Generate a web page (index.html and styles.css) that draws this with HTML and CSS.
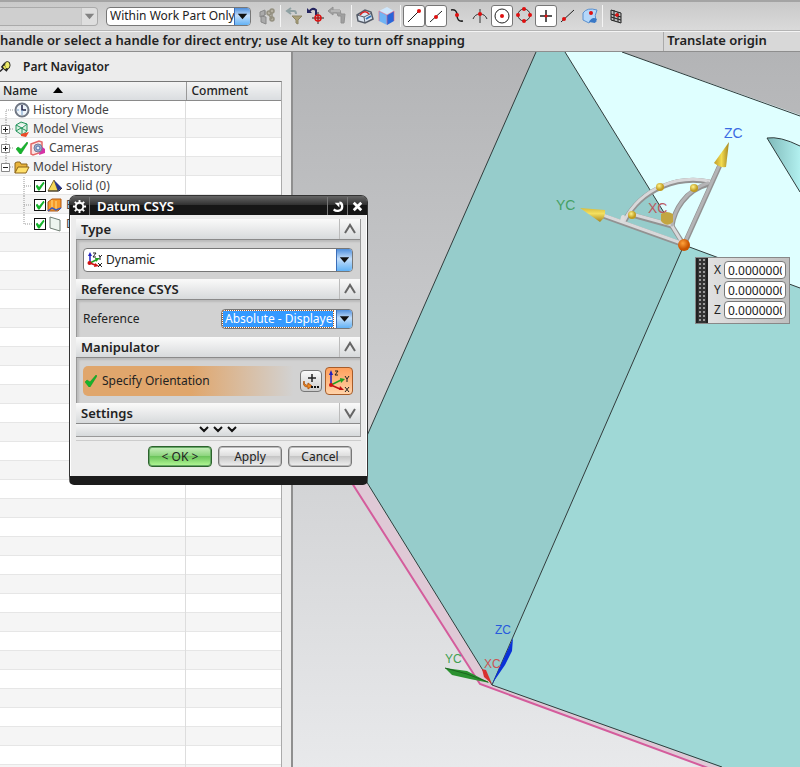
FILE: index.html
```html
<!DOCTYPE html>
<html lang="en">

<head>
  <meta charset="utf-8">
  <title>Datum CSYS</title>
  <link rel="stylesheet" href="styles.css">
</head>

<body>
  <!-- shared icon parts -->
  <svg class="defs" width="0" height="0" aria-hidden="true">
    <defs>
      <symbol id="csys" viewBox="0 0 16 16">
        <path d="M3 11V3" stroke="#2020c0" stroke-width="1.5" fill="none" />
        <path d="M3 0L5 4H1z" fill="#2020c0" />
        <path d="M3 11L9 8" stroke="#20a020" stroke-width="1.5" fill="none" />
        <path d="M8 6L13 6L9 10z" fill="#20a020" />
        <path d="M3 11L8 13" stroke="#d01010" stroke-width="1.5" fill="none" />
        <path d="M8 11L12 14L7 15z" fill="#d01010" />
        <circle cx="2.500" cy="11" r="2" fill="#d01010" />
        <path d="M6 1H9L6 5H9M12 3L13 5L15 3M13 5V8M11 11L15 15M15 11L11 15" stroke="#222" fill="none" />
      </symbol>
      <symbol id="tick" viewBox="0 0 12 12">
        <path d="M0 7L2 5L5 7L11 0L12 1L5 12H4z" fill="#16b42c" stroke="#0c9420" stroke-width=".5" />
      </symbol>
      <symbol id="arrow" viewBox="0 0 16 18">
        <path d="M3 6H13L8 12z" fill="#111" />
      </symbol>
      <linearGradient id="bg" x2="0" y2="1">
        <stop stop-color="#b3b4b6" />
        <stop offset="1" stop-color="#e8e9eb" />
      </linearGradient>
      <linearGradient id="hole">
        <stop stop-color="#7fb9b9" />
        <stop offset="1" stop-color="#b2f0ef" />
      </linearGradient>
      <linearGradient id="gold">
        <stop stop-color="#c09a28" />
        <stop offset=".5" stop-color="#f2dc50" />
        <stop offset="1" stop-color="#a48420" />
      </linearGradient>
      <linearGradient id="gold-flat" x2="0" y2="1">
        <stop stop-color="#d8bc3c" />
        <stop offset=".4" stop-color="#f4e060" />
        <stop offset="1" stop-color="#a48420" />
      </linearGradient>
      <radialGradient id="ball" cx=".4" cy=".35">
        <stop stop-color="#fff48c" />
        <stop offset="1" stop-color="#c09c20" />
      </radialGradient>
      <radialGradient id="origin" cx=".4" cy=".35">
        <stop stop-color="#ffa23c" />
        <stop offset="1" stop-color="#c85400" />
      </radialGradient>
    </defs>
  </svg>

  <header class="toolbar">
    <div class="combo disabled">
      <select class="combo-field" aria-label="Selection filter" disabled><option></option></select>
      <svg class="combo-arrow"><use href="#arrow" /></svg>
    </div>
    <div class="combo scope">
      <select class="combo-field" aria-label="Selection scope"><option>Within Work Part Only</option></select>
      <svg class="combo-arrow"><use href="#arrow" /></svg>
    </div>
    <div class="tools">
      <button class="tool" aria-label="Interpart link"><svg viewBox="0 0 20 20"><path d="M3 6L8 4V9L3 11zM4 11V16L9 18V11L4 10zM8 5V9" fill="#aaa" stroke="#888" /><g fill="#b5b0a2" stroke="#949080" stroke-width="1.500"><circle cx="12" cy="7" r="2" /><circle cx="15" cy="5" r="2" /><circle cx="15" cy="13" r="2" /><path d="M12 9L15 13M15 7V11" /></g></svg></button>
    </div>
    <div class="tools">
      <button class="tool" aria-label="Reset filters"><svg viewBox="0 0 20 20"><path d="M7 2L3 5L7 8M3 5H10Q12 5 12 8" fill="none" stroke="#8fa1a3" stroke-width="2" /><path d="M8 10H18L14 14V18L12 17V14z" fill="#aaa078" stroke="#8c8567" /></svg></button>
      <button class="tool" aria-label="Move to point"><svg viewBox="0 0 20 20"><path d="M3 6Q6 1 10 4V9" fill="none" stroke="#252560" stroke-width="2" /><path d="M1 2V7H6z" fill="#252560" /><path d="M12 6V18M6 12H18" stroke="#222" /><circle cx="12" cy="12" r="3" fill="none" stroke="#d11" stroke-width="1.500" /><path d="M10 12H14M12 10V14" stroke="#d11" /></svg></button>
      <button class="tool" aria-label="Back"><svg viewBox="0 0 20 20"><path d="M0 5L5 1V4H12L13 8H17L16 17H13V10H10L9 7H5V9z" fill="#a0a0a0" stroke="#929292" /><path d="M3 5H12" stroke="#b5b5b5" stroke-width="2" /></svg></button>
    </div>
    <div class="tools">
      <button class="tool" aria-label="Wireframe"><svg viewBox="0 0 20 20"><path d="M2 9L10 4L16 6L18 13L10 17L3 15z" fill="#dce6f2" stroke="#555c68" stroke-width="1.500" /><path d="M2 9L9 11L10 17M9 11L17 7" fill="none" stroke="#555c68" /><path d="M5 9Q10 3 14 8" fill="none" stroke="#d22" stroke-width="1.500" /><path d="M11 13L16 10" stroke="#3374bb" stroke-width="2" /></svg></button>
      <button class="tool" aria-label="Shaded"><svg viewBox="0 0 20 20"><path d="M2 5L10 9V19L2 15z" fill="#6fb4f5" /><path d="M10 9L17 5V15L10 19z" fill="#2966d9" /><path d="M2 5L10 1L17 5L10 9z" fill="#cfe7fc" /><path d="M2 5L10 9L17 5M10 9V18M2 5V15M17 5V15" fill="none" stroke="#df5f85" stroke-width=".6" /></svg></button>
    </div>
    <div class="tools snaps">
      <button class="tool on" aria-label="End point"><svg viewBox="0 0 20 20"><path d="M4 16L15 5" stroke="#222" /><circle cx="15" cy="5" r="2" fill="#e01010" /></svg></button>
      <button class="tool on" aria-label="Mid point"><svg viewBox="0 0 20 20"><path d="M4 16L16 5" stroke="#222" /><circle cx="10" cy="11" r="2" fill="#e01010" /></svg></button>
      <button class="tool" aria-label="Control point"><svg viewBox="0 0 20 20"><path d="M3 4Q9 3 9 9Q9 16 15 15" fill="none" stroke="#222" stroke-width="1.500" /><circle cx="9" cy="9" r="2" fill="#e01010" /></svg></button>
      <button class="tool" aria-label="Intersection point"><svg viewBox="0 0 20 20"><path d="M10 3V17M3 13Q5 8 10 8T17 13" fill="none" stroke="#333" /><circle cx="10" cy="8" r="2" fill="#e01010" /></svg></button>
      <button class="tool on" aria-label="Arc center"><svg viewBox="0 0 20 20"><circle cx="10" cy="10" r="7" fill="none" stroke="#222" /><circle cx="10" cy="10" r="2" fill="#e01010" /></svg></button>
      <button class="tool" aria-label="Quadrant point"><svg viewBox="0 0 20 20"><circle cx="10" cy="9" r="6" fill="none" stroke="#333" /><g fill="#e01010"><circle cx="10" cy="3" r="2" /><circle cx="4" cy="9" r="2" /><circle cx="16" cy="9" r="2" /><circle cx="10" cy="15" r="2" /></g></svg></button>
      <button class="tool on" aria-label="Existing point"><svg viewBox="0 0 20 20"><path d="M10 4V16M4 10H16" stroke="#222" stroke-width="1.500" /><circle cx="10" cy="10" r="1.500" fill="#e01010" /></svg></button>
      <button class="tool" aria-label="Point on curve"><svg viewBox="0 0 20 20"><path d="M3 16L16 4" stroke="#222" /><circle cx="6" cy="13" r="2" fill="#e01010" /></svg></button>
      <button class="tool" aria-label="Point on face"><svg viewBox="0 0 20 20"><path d="M3 7Q7 1 17 4Q14 9 16 16Q12 12 9 17L3 14z" fill="#b4d7fa" stroke="#5990cf" /><path d="M9 16Q12 10 17 13L15 17z" fill="#3978c6" /><circle cx="11" cy="7" r="2" fill="#e01010" /></svg></button>
    </div>
    <div class="tools">
      <button class="tool" aria-label="Bounded grid"><svg viewBox="0 0 20 20"><path d="M5 4L15 7V17L5 14zM8 4V15M12 6V16M5 8L15 11M5 11L15 14" fill="#bbb" stroke="#222" /><path d="M9 9H13M11 7V11" stroke="#e01010" stroke-width="1.500" /></svg></button>
    </div>
  </header>

  <div class="cue">
    <p class="cue-text">handle or select a handle for direct entry; use Alt key to turn off snapping</p>
    <p class="status-text">Translate origin</p>
  </div>

  <main class="work">
    <aside class="navigator">
      <h2 class="nav-title">
        <svg class="pin" viewBox="0 0 12 12"><path d="M0 11L3 8M2 6L7 10L9 7L10 2L5 2z" stroke="#222" stroke-width="1.500" fill="#6b6828" /><ellipse cx="8" cy="4" rx="3" ry="4" fill="#eeed6a" stroke="#222" /><path d="M4 5L6 8" stroke="#e8e55b" stroke-width="2" /></svg>
        Part Navigator
      </h2>
      <div class="tree">
        <table class="tree-table">
          <thead>
            <tr>
              <th class="col-name">Name <svg class="sort" viewBox="0 0 10 6"><path d="M0 6L5 0L10 6z" /></svg></th>
              <th>Comment</th>
            </tr>
          </thead>
          <tbody>
            <tr>
              <td><div class="node"><svg class="guide" viewBox="0 0 14 19"><path class="dots" d="M6 19V9H14" /></svg><svg class="icon" viewBox="0 0 16 16"><circle cx="8" cy="8" r="6.500" fill="#eef4fa" stroke="#707784" stroke-width="2" /><path d="M8 3V8H12" fill="none" stroke="#224" stroke-width="1.500" /><path d="M8 8V13M3 8H5" stroke="#77a0cc" /></svg>History Mode</div></td>
              <td></td>
            </tr>
            <tr>
              <td><div class="node"><svg class="guide" viewBox="0 0 14 19"><path class="dots" d="M6 0V19M6 9H14" /><path class="box" d="M1.500 5.500H9.500V13.500H1.500z" /><path class="sign" d="M3 9.500H8M5.500 7V12" /></svg><svg class="icon" viewBox="0 0 16 16"><path d="M2 4L7 1L13 3V10L8 14L2 10zM2 4L8 7L13 3M8 7V13M2 10L7 7L13 10" fill="#d8f0df" stroke="#22935c" /><path d="M7 13L15 11L12 16L7 15z" fill="#ec4b28" /></svg>Model Views</div></td>
              <td></td>
            </tr>
            <tr>
              <td><div class="node"><svg class="guide" viewBox="0 0 14 19"><path class="dots" d="M6 0V19M6 9H14" /><path class="box" d="M1.500 5.500H9.500V13.500H1.500z" /><path class="sign" d="M3 9.500H8M5.500 7V12" /></svg><svg class="mark"><use href="#tick" /></svg><svg class="icon" viewBox="0 0 16 16"><path d="M1 4L9 1L12 2V12L3 15L1 14z" fill="#fbe4e4" stroke="#e46767" stroke-width="1.500" /><path d="M11 6L15 9V13L9 15z" fill="#d633a5" /><circle cx="8" cy="8" r="4" fill="#9fb0cc" stroke="#747b99" /><circle cx="8" cy="8" r="2" fill="#e4eaf5" stroke="#5570aa" /></svg>Cameras</div></td>
              <td></td>
            </tr>
            <tr>
              <td><div class="node"><svg class="guide" viewBox="0 0 14 19"><path class="dots" d="M6 0V9M6 9H14" /><path class="box" d="M1.500 5.500H9.500V13.500H1.500z" /><path class="sign" d="M3 9.500H8" /></svg><svg class="icon" viewBox="0 0 16 16"><path d="M1 14V4L3 3H6L7 5H13V8" fill="#e9b43b" stroke="#8c651a" /><path d="M1 14L4 8H15L12 14z" fill="#ffe06b" stroke="#8c651a" /></svg>Model History</div></td>
              <td></td>
            </tr>
            <tr>
              <td><div class="node child"><svg class="guide" viewBox="0 0 14 19"><path class="dots" d="M6 0V19M6 9H14" /></svg><input class="check" type="checkbox" aria-label="Show solid (0)" checked><svg class="icon" viewBox="0 0 16 16"><path d="M1 13L7 2L11 13z" fill="#f5d857" stroke="#8a7432" /><path d="M7 2L15 10L11 13z" fill="#26358c" /><path d="M1 13H12L15 10" fill="none" stroke="#333" /></svg>solid (0)</div></td>
              <td></td>
            </tr>
            <tr>
              <td><div class="node child"><svg class="guide" viewBox="0 0 14 19"><path class="dots" d="M6 0V19M6 9H14" /></svg><input class="check" type="checkbox" aria-label="Show E" checked><svg class="icon" viewBox="0 0 16 16"><path d="M1 5L5 2H14V11L11 14H1z" fill="#f79a29" stroke="#af5814" /><path d="M5 3V11M9 4V13" stroke="#ffe08a" /><path d="M1 14L5 11L9 13L14 11" fill="none" stroke="#3e5ab8" stroke-width="1.500" /></svg>E</div></td>
              <td></td>
            </tr>
            <tr>
              <td><div class="node child"><svg class="guide" viewBox="0 0 14 19"><path class="dots" d="M6 0V9H14" /></svg><input class="check" type="checkbox" aria-label="Show D" checked><svg class="icon" viewBox="0 0 16 16"><path d="M3 1L13 4V15L3 12z" fill="#edf5ef" stroke="#6e7d72" /></svg>D</div></td>
              <td></td>
            </tr>
          </tbody>
        </table>
      </div>
    </aside>

    <section class="view" aria-label="Graphics window">
      <svg class="scene" viewBox="293 52 507 715" preserveAspectRatio="xMinYMin slice">
        <path d="M293 52H800V767H293z" fill="url(#bg)" />
        <!-- datum plane behind the solid -->
        <path d="M343 469L480 684L706 767H732L492 685L355 465z" fill="#dfc9d6" />
        <path d="M343 469L480 684L708 768" fill="none" stroke="#d45c9c" stroke-width="2" />
        <!-- solid faces -->
        <path d="M536 52H565L684 245L492 685L355 463z" fill="#96cccb" />
        <path d="M565 52H622L800 115V288L684 245z" fill="#dfffff" />
        <path d="M684 245L800 288V767H720L492 685z" fill="#9fd8d6" />
        <path d="M767 138Q780 136 800 146V192z" fill="url(#hole)" />
        <path d="M536 52L355 463L492 685L722 767M565 52L684 245L492 685M684 245L800 288M622 52L800 116M800 146Q780 136 767 138L800 192" fill="none" stroke="#303c3c" />
        <!-- work coordinate system -->
        <path d="M492 684L508 649L513 638L512 651L505 665z" fill="#0a32d8" />
        <path d="M490 683L467 671L445 668L452 675L470 679z" fill="#2b9130" />
        <path d="M445 668L467 674L488 682" fill="none" stroke="#1b651e" />
        <path d="M492 684L484 677L482 669L486 670z" fill="#d83030" />
        <g class="axis-text">
          <text x="495" y="634" fill="#2759dd">ZC</text>
          <text x="445" y="663" fill="#42a052">YC</text>
          <text x="484" y="668" fill="#cb5353">XC</text>
        </g>
        <!-- drag handles -->
        <g fill="none" stroke-linecap="round">
          <g stroke="#929292" stroke-width="5">
            <path d="M684 245L720 165" />
            <path d="M684 245L603 216" />
            <path d="M684 245L672 226" />
            <path d="M624 222C642 187 680 176 709 182" />
            <path d="M632 215L672 226C674 211 685 190 709 184" />
          </g>
          <g stroke="#d8d8da" stroke-width="3">
            <path d="M684 244L603 215" />
            <path d="M683 244L672 226" />
            <path d="M624 221C642 186 680 175 709 181" />
            <path d="M632 214L672 225" />
          </g>
          <path d="M684 244L720 164M672 225C674 211 685 190 708 183" stroke="#b4b4b6" stroke-width="3" />
          <path d="M622 221L623 217" stroke="#ddd" stroke-width="4" />
        </g>
        <path d="M729 142L726 167Q720 168 714 163z" fill="url(#gold)" />
        <path d="M580 208L605 210Q606 217 600 222z" fill="url(#gold-flat)" />
        <path d="M661 214Q666 210 673 214V222Q667 228 661 221z" fill="#c2a542" />
        <g fill="url(#ball)">
          <circle cx="660" cy="187" r="4" />
          <circle cx="694" cy="188" r="4" />
          <circle cx="632" cy="215" r="4" />
        </g>
        <circle cx="684" cy="245" r="6" fill="url(#origin)" />
        <g class="axis-text large">
          <text x="724" y="138" fill="#3b6be3">ZC</text>
          <text x="556" y="210" fill="#45a064">YC</text>
          <text x="648" y="213" fill="#ba5b62">XC</text>
        </g>
      </svg>

      <form class="coords">
        <div class="grip"></div>
        <label class="coord">X <input value="0.00000000"></label>
        <label class="coord">Y <input value="0.00000000"></label>
        <label class="coord">Z <input value="0.00000000"></label>
      </form>
    </section>
  </main>

  <div class="dialog" role="dialog" aria-labelledby="dialog-title">
    <div class="titlebar">
      <button class="title-button" aria-label="Options"><svg viewBox="0 0 16 16"><circle cx="8" cy="8" r="4" fill="none" stroke="#fff" stroke-width="2" /><path d="M8 1V4M8 12V15M1 8H4M12 8H15M3 3L5 5M11 11L13 13M13 3L11 5M5 11L3 13" stroke="#fff" stroke-width="2" /></svg></button>
      <h1 id="dialog-title">Datum CSYS</h1>
      <button class="title-button" aria-label="Reset"><svg viewBox="0 0 16 16"><path d="M4 11C7 14 13 13 13 8C13 6 12 4 10 4" fill="none" stroke="#fff" stroke-width="2.500" /><path d="M5 4H10V9z" fill="#fff" /></svg></button>
      <button class="title-button" aria-label="Close"><svg viewBox="0 0 16 16"><path d="M4 4L12 12M12 4L4 12" stroke="#fff" stroke-width="3" /></svg></button>
    </div>
    <div class="dialog-body">
      <div class="groups">
        <h3 class="group-title">Type <button class="fold" aria-label="Collapse Type"><svg viewBox="0 0 14 14"><path d="M2 11L7 3L12 11" /></svg></button></h3>
        <div class="group type-group">
          <div class="combo type">
            <svg class="csys-icon"><use href="#csys" /></svg>
            <select class="combo-field" aria-label="Type"><option>Dynamic</option></select>
            <svg class="combo-arrow"><use href="#arrow" /></svg>
          </div>
        </div>
        <h3 class="group-title">Reference CSYS <button class="fold" aria-label="Collapse Reference CSYS"><svg viewBox="0 0 14 14"><path d="M2 11L7 3L12 11" /></svg></button></h3>
        <div class="group">
          <label for="reference">Reference</label>
          <div class="combo reference">
            <select id="reference" class="combo-field"><option>Absolute - Displayed Part</option></select>
            <svg class="combo-arrow"><use href="#arrow" /></svg>
          </div>
        </div>
        <h3 class="group-title">Manipulator <button class="fold" aria-label="Collapse Manipulator"><svg viewBox="0 0 14 14"><path d="M2 11L7 3L12 11" /></svg></button></h3>
        <div class="group step-group">
          <div class="step">
            <svg class="mark"><use href="#tick" /></svg>
            <span class="step-name">Specify Orientation</span>
            <button class="point" aria-label="Point dialog"><svg viewBox="0 0 18 18"><path d="M10 2V10M6 6H14" stroke="#222" stroke-width="1.500" /><path d="M2 9Q2 14 6 13V11L10 14L6 17V15Q0 15 2 9" fill="#f08a22" stroke="#b45a12" /><path d="M9 15H17" stroke="#111" stroke-width="2" stroke-dasharray="2 1" /></svg></button>
            <button class="orient" aria-label="Manipulator"><svg viewBox="0 0 26 26"><path d="M5 17V5" stroke="#2020c0" stroke-width="1.500" /><path d="M5 2L7 7H3z" fill="#2020c0" /><path d="M5 17L15 12" stroke="#20a020" stroke-width="1.500" /><path d="M14 10L19 11L15 15z" fill="#20a020" /><path d="M5 17L14 21" stroke="#c01010" stroke-width="1.500" /><path d="M14 18L18 22L13 22z" fill="#c01010" /><circle cx="5" cy="17" r="2" fill="#d01010" /><path d="M9 3H12L9 7H12M19 8L21 11L23 8M21 11V14M19 19L23 24M23 19L19 24" fill="none" stroke="#222" /></svg></button>
          </div>
        </div>
        <h3 class="group-title">Settings <button class="fold" aria-label="Expand Settings"><svg viewBox="0 0 14 14"><path d="M2 3L7 11L12 3" /></svg></button></h3>
        <button class="more" aria-label="More"><svg viewBox="0 0 40 8"><path d="M2 1L6 5L10 1M16 1L20 5L24 1M30 1L34 5L38 1" /></svg></button>
      </div>
      <div class="buttons">
        <button class="button ok">&lt; OK &gt;</button>
        <button class="button">Apply</button>
        <button class="button">Cancel</button>
      </div>
    </div>
  </div>
</body>

</html>
```

FILE: styles.css
```css
*,
*:before,
*:after {
  box-sizing: border-box
}

* {
  margin: 0;
  padding: 0
}

body {
  min-height: 100vh;
  display: flex;
  flex-direction: column;
  overflow: hidden;
  position: relative;
  font: 12px/16px 'Noto Sans', 'Open Sans', sans-serif;
  color: #222;
  background: #ececec
}

h1,
h2,
h3 {
  font-size: 13px;
  font-weight: 600
}

input,
button,
select {
  font: inherit;
  color: inherit
}

button {
  border: none;
  background: transparent
}

svg {
  display: block;
  flex-shrink: 0
}

.defs {
  position: absolute
}

/* toolbar */

.toolbar {
  height: 31px;
  display: flex;
  align-items: center;
  border-top: 2px solid #a4a4a4;
  border-bottom: 1px solid #b4b4b4;
  background: linear-gradient(#c9c9c9, #dadada)
}

.tools {
  display: flex;
  padding-inline: 2px;
  border-right: 1px solid #f4f4f4
}

.tools:last-child {
  border: none
}

.tool {
  width: 22px;
  height: 22px;
  padding: 1px
}

.snaps {
  padding-inline: 2px 1px
}

.tool svg {
  width: 20px;
  height: 20px
}

.on {
  border: 1px solid #777;
  border-radius: 3px;
  background: #fff;
  padding: 0
}

.combo {
  display: flex;
  align-items: center;
  height: 19px;
  border: 1px solid #777;
  border-radius: 4px;
  background: #fff;
  overflow: hidden
}

.combo-field {
  flex: 1;
  min-width: 0;
  height: 100%;
  padding-left: 3px;
  border: none;
  outline: none;
  appearance: none;
  background: transparent
}

.combo-arrow {
  width: 16px;
  height: 100%;
  border-left: 1px solid #3a6db8;
  background: linear-gradient(#4e8edb, #c4defa 45%, #62b2f5)
}

.disabled {
  width: 98px;
  border-color: #aaa;
  border-left: none;
  border-radius: 0 4px 4px 0;
  background: #cfcfcf
}

.disabled .combo-arrow {
  border-color: #b8b8b8;
  background: #f4f4f4;
  opacity: .4
}

.scope {
  width: 145px;
  margin-inline: 8px 3px
}

/* cue line */

.cue {
  height: 21px;
  display: flex;
  border-top: 1px solid #f4f4f4;
  border-bottom: 1px solid #8e8e8e;
  background: #d8d8d8;
  font-size: 13px;
  font-weight: 600;
  line-height: 17px;
  white-space: nowrap
}

.cue-text {
  flex: 5;
  min-width: 0;
  overflow: hidden
}

.status-text {
  flex: 1;
  padding-left: 3px;
  border-left: 1px solid #aaa
}

/* part navigator */

.work {
  flex: 1;
  display: flex
}

.navigator {
  width: 293px;
  flex-shrink: 0;
  display: flex;
  flex-direction: column;
  border-right: 2px solid #8f8f8f;
  background: #ececec
}

.nav-title {
  height: 29px;
  display: flex;
  align-items: center;
  gap: 12px;
  font-size: 12px
}

.pin {
  width: 11px;
  height: 12px
}

.tree {
  flex: 1;
  width: 282px;
  border-top: 1px solid #777;
  border-right: 1px solid #aaa;
  background:
    linear-gradient(#ddd, #ddd) 185px 0 / 1px 100% no-repeat,
    repeating-linear-gradient(#fff 0 18px, #e6e6e6 18px 19px, #f5f5f5 19px 37px, #e6e6e6 37px 38px) 0 18px
}

.tree-table {
  width: 100%;
  border-collapse: collapse;
  table-layout: fixed
}

th {
  height: 18px;
  padding-left: 5px;
  border-bottom: 1px solid #8a8a8a;
  background: linear-gradient(#f4f4f4, #dadde0);
  text-align: left;
  font-weight: 500;
  line-height: 17px
}

.col-name {
  width: 186px;
  padding-left: 3px;
  border-right: 1px solid #999
}

.sort {
  display: inline-block;
  width: 10px;
  height: 6px;
  margin: 0 0 2px 12px
}

.node {
  height: 19px;
  display: flex;
  align-items: center;
  white-space: nowrap;
  color: #444
}

.child {
  padding-left: 18px
}

.guide {
  width: 14px;
  height: 19px
}

.dots {
  fill: none;
  stroke: #999;
  stroke-dasharray: 1 1
}

.box {
  fill: #fff;
  stroke: #888
}

.sign {
  stroke: #222
}

.icon {
  width: 16px;
  height: 16px;
  margin-right: 3px
}

.mark {
  width: 12px;
  height: 12px;
  margin: 0 2px
}

.check {
  appearance: none;
  width: 12px;
  height: 12px;
  margin: 0 1px 0 2px;
  display: grid;
  place-items: center;
  border: 1px solid #111;
  background: #fff
}

.check:checked:before {
  content: '';
  width: 9px;
  height: 9px;
  background: #16b42c;
  clip-path: polygon(0 50%, 20% 35%, 40% 60%, 90% 0, 100% 20%, 45% 100%, 30% 100%)
}

/* graphics window */

.view {
  flex: 1;
  position: relative;
  overflow: hidden
}

.scene {
  position: absolute;
  inset: 0;
  width: 100%;
  height: 100%
}

.axis-text {
  font-family: 'Liberation Sans', sans-serif;
  font-size: 12px
}

.large {
  font-size: 14px
}

.coords {
  position: absolute;
  left: 402px;
  top: 205px;
  width: 95px;
  padding: 2px 3px 3px 18px;
  border: 1px solid #888;
  background: linear-gradient(90deg, #e6e6e6, #bfbfbf)
}

.grip {
  position: absolute;
  left: 0;
  top: 0;
  bottom: 0;
  width: 12px;
  border-inline: 2px solid #222;
  background: radial-gradient(#999 1px, #333 1px) 0 0 / 4px 4px
}

.coord {
  height: 20px;
  display: grid;
  grid-template-columns: 9px 1fr;
  gap: 1px;
  align-items: center
}

.coord input {
  width: 100%;
  height: 18px;
  padding-inline: 3px;
  border: 1px solid #777;
  border-radius: 4px;
  background: #fff
}

/* dialog */

.dialog {
  position: absolute;
  left: 69px;
  top: 195px;
  width: 299px;
  border: 1px solid #333;
  border-bottom: 9px solid #1c1c1c;
  border-radius: 7px 7px 5px 5px;
  background: #ececec
}

.titlebar {
  height: 19px;
  display: flex;
  align-items: center;
  border-radius: 5px 5px 0 0;
  background: linear-gradient(#666, #333 45%, #161616 50%);
  color: #fff
}

.titlebar h1 {
  flex: 1;
  padding-left: 7px
}

.title-button {
  width: 20px;
  height: 18px;
  padding: 2px;
  border-left: 1px solid #777
}

.title-button:first-child {
  border: none;
  border-right: 1px solid #777
}

.title-button svg {
  width: 15px;
  height: 15px
}

.dialog-body {
  padding: 4px 5px 9px;
  border: solid #fff;
  border-width: 0 1px
}

.groups {
  border-right: 1px solid #999;
  border-bottom: 1px solid #999
}

.group-title {
  height: 21px;
  display: flex;
  align-items: center;
  justify-content: space-between;
  padding-left: 5px;
  border-bottom: 1px solid #8a8a8a;
  background: linear-gradient(#fafafa, #e9eaeb 50%, #d7dadc)
}

.fold {
  width: 21px;
  height: 20px;
  padding: 3px;
  border-left: 1px solid #bbb
}

.fold svg {
  width: 14px;
  height: 14px
}

.fold path {
  fill: none;
  stroke: #666;
  stroke-width: 2
}

.group {
  height: 37px;
  padding: 6px 7px 6px 6px;
  display: flex;
  align-items: center;
  justify-content: space-between;
  border-left: 1px solid #999;
  background: #d2d2d2;
  box-shadow: inset 2px 2px 2px #bbb
}

.type-group {
  height: 39px
}

.step-group {
  height: 45px
}

.type {
  flex: 1;
  height: 24px
}

.csys-icon {
  width: 16px;
  height: 16px;
  margin-left: 3px
}

.reference {
  width: 132px;
  height: 20px
}

.reference .combo-field {
  height: 16px;
  margin: 1px 3px 1px 1px;
  padding-left: 2px;
  outline: 1px dotted #a85b22;
  background: #3399ff;
  color: #fff
}

.step {
  flex: 1;
  height: 30px;
  display: flex;
  align-items: center;
  gap: 3px;
  border-radius: 5px;
  background: linear-gradient(90deg, #e0a66c 40%, #d2d2d2 78%)
}

.step-name {
  flex: 1
}

.point,
.orient {
  width: 22px;
  height: 22px;
  padding: 1px;
  border: 1px solid #777;
  border-radius: 4px;
  background: linear-gradient(#fafafa, #ccc)
}

.orient {
  width: 28px;
  height: 28px;
  padding: 0;
  border-color: #a75c29;
  background: linear-gradient(#ffa05c, #ffd2a8)
}

.more {
  width: 100%;
  height: 12px;
  display: grid;
  place-items: center;
  background: linear-gradient(#f4f4f4, #d6d9db)
}

.more svg {
  width: 40px;
  height: 8px
}

.more path {
  fill: none;
  stroke: #111;
  stroke-width: 2
}

.buttons {
  display: flex;
  justify-content: flex-end;
  gap: 6px;
  margin-top: 3px;
  padding: 5px 9px 0 0;
  border-top: 1px solid #ccc
}

.button {
  width: 64px;
  height: 21px;
  border: 1px solid #777;
  border-radius: 4px;
  box-shadow: inset 0 0 0 1px #bbb;
  background: linear-gradient(#fafafa, #ddd 48%, #c6c6c6 50%, #f0f0f0)
}

.ok {
  border-color: #2c622c;
  box-shadow: inset 0 0 0 1px #65a765;
  background: linear-gradient(#cbf0c0, #8bd47c 48%, #6cc45c 50%, #b5fa98)
}
```
